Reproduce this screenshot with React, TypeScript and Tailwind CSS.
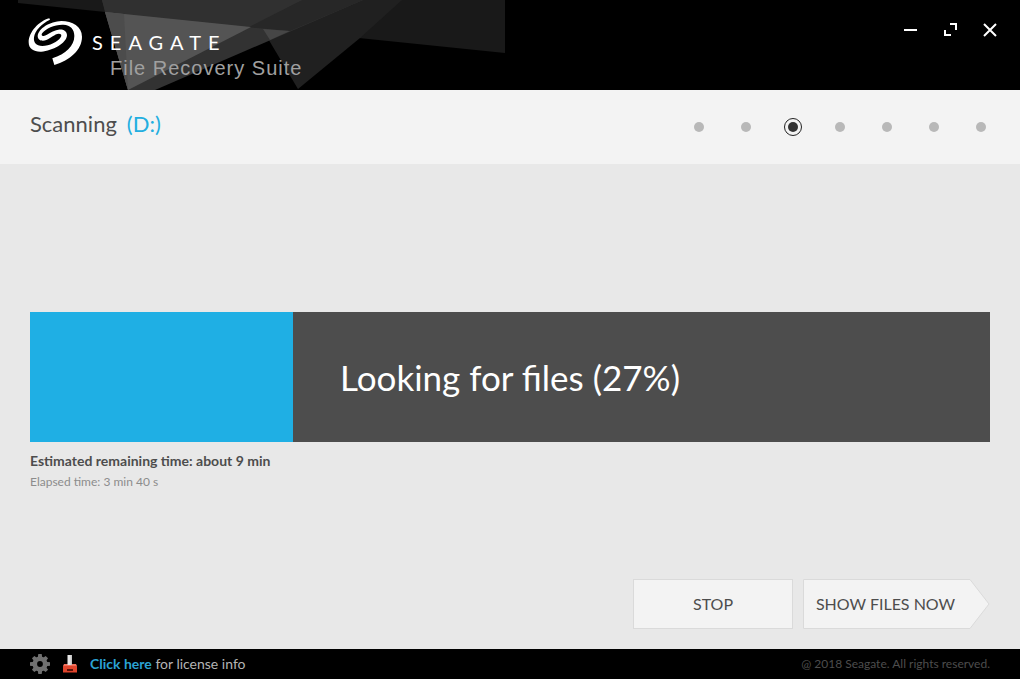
import React from "react";

const STEPS = ["Start", "Drive", "Scan", "Results", "Select", "Recover", "Finish"];
const CURRENT_STEP = 2;
const PROGRESS = 27.4;

function HeaderArt() {
  return (
    <svg className="absolute left-0 top-0" width="505" height="90" viewBox="0 0 505 90" aria-hidden="true">
      <polygon points="18,0 505,0 505,53 18,3" fill="#191919" />
      <polygon points="245,0 402,0 360,38 298,89" fill="#202020" />
      <polygon points="102,0 363,0 155,90 128,90" fill="#323232" />
      <polygon points="302,0 363,0 290,31 245,27" fill="#272727" />
      <polygon points="102,0 302,0 249,27 105,12" fill="#303030" />
      <polygon points="105,12 251,27 128,90" fill="#545454" />
      <polygon points="105,12 124,14 128,90" fill="#4c4c4c" />
      <polygon points="263,29 290,31 270,40" fill="#464646" />
    </svg>
  );
}

function SeagateMark() {
  return (
    <svg width="54" height="48" viewBox="12 12 162 144" fill="#fff" aria-hidden="true">
      <path d="M76 13C45 21 14 54 14 85C14 105 30 114 52 113C85 111 128 88 129 64C129 50 116 45 103 47C85 50 72 62 59 66C53 67 51 62 55 57C66 43 92 31 118 32C140 33 151 46 151 66C151 96 125 120 85 133L91 153C138 138 174 108 174 68C174 38 145 21 112 21C78 22 43 44 41 66C41 79 54 83 67 78C81 72 92 60 104 59C112 59 114 64 110 70C102 84 76 96 55 96C36 96 28 86 30 70C33 49 53 29 78 17Z" />
    </svg>
  );
}

function GearIcon() {
  return (
    <svg width="20" height="20" viewBox="0 0 20 20" fill="none" aria-hidden="true">
      <circle cx="10" cy="10" r="5.200" stroke="#707070" strokeWidth="4.600" />
      <g fill="#707070">
        <path d="M8.300 0h3.400l.6 4H7.700zM8.300 20h3.400l.6-4H7.700z" />
        <path d="M0 8.300v3.400l4 .6V7.700zM20 8.300v3.400l-4 .6V7.700z" />
        <path d="M8.300 .3h3.400l.6 4H7.700zM8.300 19.700h3.400l.6-4H7.700zM.3 8.300v3.400l4 .6V7.700zM19.700 8.300v3.400l-4 .6V7.700z" transform="rotate(45 10 10)" />
      </g>
    </svg>
  );
}

function DriveIcon() {
  return (
    <svg width="16" height="20" viewBox="0 0 16 20" aria-hidden="true">
      <path d="M2 10h12l1 2H1z" fill="#f0705c" />
      <path d="M1 12h14v6.500H1z" fill="#e0452d" />
      <path d="M5 15h6v2H5z" fill="#5c1209" />
      <path d="M5.500 1H10v10H5.500z" fill="#e8e8e8" />
      <path d="M8.500 1H10v10H8.500z" fill="#c4c4c4" />
    </svg>
  );
}

export default function App() {
  return (
    <div className="flex min-h-screen flex-col bg-[#e8e8e8] font-['Lato',sans-serif] text-[#4d4d4d]">
      <header className="relative flex h-[90px] shrink-0 justify-between bg-black pl-7 pr-5">
        <HeaderArt />
        <div className="relative flex gap-[10px] pt-[18px]">
          <SeagateMark />
          <div className="pt-3 text-white">
            <div className="text-xl leading-6 tracking-[7px]">SEAGATE</div>
            <div className="pl-[18px] font-['Liberation_Sans',Arial,sans-serif] text-xl leading-7 tracking-wider text-[#a0a0a0]">
              File Recovery Suite
            </div>
          </div>
        </div>
        <div className="relative flex h-[60px] items-center gap-5">
          <button type="button" aria-label="Minimize" className="flex size-5 items-center justify-center">
            <svg width="14" height="14" viewBox="0 0 14 14"><path d="M1 7h13" stroke="#fff" strokeWidth="2" /></svg>
          </button>
          <button type="button" aria-label="Maximize" className="flex size-5 items-center justify-center">
            <svg width="14" height="14" viewBox="0 0 14 14" fill="none" stroke="#fff" strokeWidth="2">
              <path d="M7 1h6v6M2 7v5h6" />
            </svg>
          </button>
          <button type="button" aria-label="Close" className="flex size-5 items-center justify-center">
            <svg width="14" height="14" viewBox="0 0 14 14"><path d="M1 1l12 12M13 1L1 13" stroke="#fff" strokeWidth="2" /></svg>
          </button>
        </div>
      </header>

      <section className="flex h-[74px] shrink-0 items-center justify-between bg-[#f3f3f3] px-[30px]">
        <h1 className="flex gap-[10px] pb-1.5 text-[22px] leading-7">
          Scanning <span className="text-[#22aee0]">(D:)</span>
        </h1>
        <ol className="flex items-center gap-[29px]">
          {STEPS.map((step, i) => (
            <li
              key={step}
              aria-label={step}
              aria-current={i === CURRENT_STEP ? "step" : undefined}
              className="flex h-[18px] w-[18px] items-center justify-center"
            >
              {i === CURRENT_STEP ? (
                <span className="flex size-[18px] items-center justify-center rounded-full border border-[#222]">
                  <span className="size-[10px] rounded-full bg-[#333]" />
                </span>
              ) : (
                <span className="size-[10px] rounded-full bg-[#b8b8b8]" />
              )}
            </li>
          ))}
        </ol>
      </section>

      <main className="flex grow flex-col px-[30px] pb-5 pt-[148px]">
        <div
          role="progressbar"
          aria-label="Scan progress"
          aria-valuenow={27}
          aria-valuemin={0}
          aria-valuemax={100}
          className="grid h-[130px] items-center bg-[#4d4d4d]"
        >
          <div className="col-start-1 row-start-1 h-full bg-[#1fafe4]" style={{ width: `${PROGRESS}%` }} />
          <div className="col-start-1 row-start-1 text-center text-[35px] leading-10 text-white">Looking for files (27%)</div>
        </div>
        <p className="pt-[9px] text-sm font-bold leading-5">Estimated remaining time: about 9 min</p>
        <p className="text-xs leading-[22px] text-[#8c8c8c]">Elapsed time: 3 min 40 s</p>
        <div className="mt-auto flex justify-end gap-[10px] text-base">
          <button type="button" className="h-[50px] w-40 border border-[#dadada] bg-[#f3f3f3]">STOP</button>
          <button type="button" className="relative h-[50px] w-[187px] pr-[22px]">
            <svg className="absolute left-0 top-0" width="187" height="50" viewBox="0 0 187 50" aria-hidden="true">
              <path d="M.5.5H167L186 25L167 49.500H.5Z" fill="#f3f3f3" stroke="#dadada" />
            </svg>
            <span className="relative">SHOW FILES NOW</span>
          </button>
        </div>
      </main>

      <footer className="flex h-[30px] shrink-0 items-center justify-between bg-black px-[30px]">
        <div className="flex items-center">
          <button type="button" aria-label="Settings"><GearIcon /></button>
          <span className="pl-3 pr-3"><DriveIcon /></span>
          <p className="text-sm text-[#b4b4b4]">
            <a href="#license" className="font-bold text-[#2ba3d4]">Click here</a> for license info
          </p>
        </div>
        <p className="text-xs text-[#4d4d4d]">@ 2018 Seagate. All rights reserved.</p>
      </footer>
    </div>
  );
}
